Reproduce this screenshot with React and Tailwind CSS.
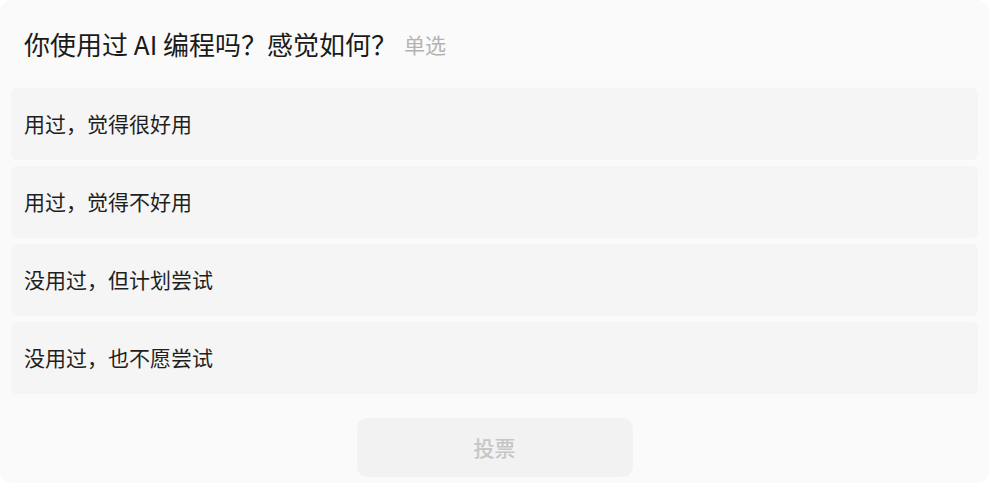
import { useState } from 'react';

const options = [
  '用过，觉得很好用',
  '用过，觉得不好用',
  '没用过，但计划尝试',
  '没用过，也不愿尝试',
];

export default function App() {
  const [selected, setSelected] = useState(null);

  return (
    <div
      className="min-h-screen bg-white"
      style={{ fontFamily: '"Noto Sans CJK SC", "Noto Sans", sans-serif' }}
    >
      <div className="w-[989px] rounded-xl bg-[#fafafa] px-[11px] pb-[6px]">
        <div className="flex h-[88px] items-center px-[13px]">
          <h1 className="text-[26px] leading-none text-[#1a1a1a]">
            你使用过 AI 编程吗？感觉如何？
          </h1>
          <span className="ml-[7px] text-[21px] leading-none text-[#b3b3b3]">单选</span>
        </div>

        <div className="flex flex-col gap-[6px]">
          {options.map((opt, i) => (
            <button
              key={opt}
              onClick={() => setSelected(i)}
              className={
                'flex h-[72px] w-full items-center rounded-md px-[13px] text-left text-[21px] text-[#1f1f1f] ' +
                (selected === i ? 'bg-[#eeeeee]' : 'bg-[#f5f5f5]')
              }
            >
              {opt}
            </button>
          ))}
        </div>

        <div className="flex justify-center pt-[24px]">
          <button
            disabled={selected === null}
            className="h-[59px] w-[276px] rounded-[10px] bg-[#f2f2f2] text-[21px] font-medium text-[#c6c6c6]"
          >
            投票
          </button>
        </div>
      </div>
    </div>
  );
}
